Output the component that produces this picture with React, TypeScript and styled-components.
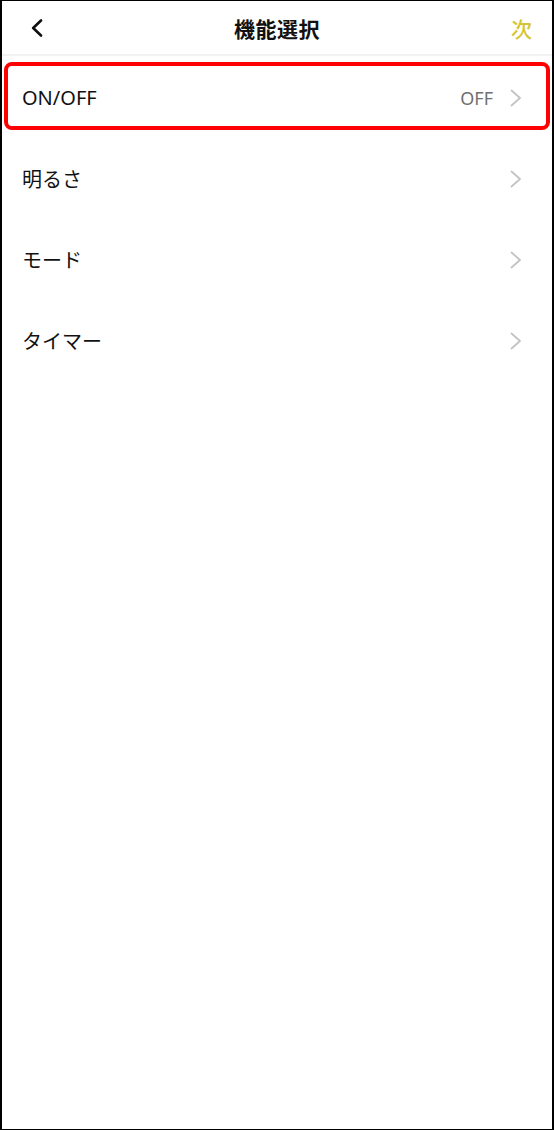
import { createGlobalStyle } from 'styled-components';
import styled from 'styled-components';

const GlobalStyle = createGlobalStyle`
  html, body {
    margin: 0;
    padding: 0;
    background: #ffffff;
  }
  body {
    font-family: 'Noto Sans', 'Noto Sans CJK JP', sans-serif;
    color: #111111;
  }
`;

type Feature = {
  id: string;
  label: string;
  value?: string;
  highlighted?: boolean;
};

const features: Feature[] = [
  { id: 'power', label: 'ON/OFF', value: 'OFF', highlighted: true },
  { id: 'brightness', label: '明るさ' },
  { id: 'mode', label: 'モード' },
  { id: 'timer', label: 'タイマー' },
];

const BackIcon = () => (
  <svg width="12" height="18" viewBox="0 0 12 18" fill="none">
    <polyline
      points="10,1.5 2.2,9 10,16.5"
      stroke="#111111"
      strokeWidth="2.6"
      strokeLinecap="round"
      strokeLinejoin="round"
    />
  </svg>
);

const ChevronIcon = () => (
  <svg width="12" height="18" viewBox="0 0 12 18" fill="none">
    <polyline
      points="1.5,1.5 10,9 1.5,16.5"
      stroke="#c3c3c3"
      strokeWidth="1.8"
      strokeLinecap="round"
      strokeLinejoin="round"
    />
  </svg>
);

const App = () => {
  return (
    <>
      <GlobalStyle />
      <Frame>
        <Header>
          <BackButton aria-label="戻る">
            <BackIcon />
          </BackButton>
          <Title>機能選択</Title>
          <NextButton>次</NextButton>
        </Header>
        <FeatureList>
          {features.map((item) => {
            return (
              <FeatureRow key={item.id}>
                {item.highlighted && <Highlight />}
                <RowLabel>{item.label}</RowLabel>
                <RowTrail>
                  {item.value && <RowValue>{item.value}</RowValue>}
                  <ChevronIcon />
                </RowTrail>
              </FeatureRow>
            );
          })}
        </FeatureList>
      </Frame>
    </>
  );
};

export default App;

const Frame = styled.div`
  box-sizing: border-box;
  width: 554px;
  height: 1130px;
  border-top: 1px solid #000000;
  border-bottom: 1px solid #000000;
  border-left: 2px solid #000000;
  border-right: 2px solid #000000;
  background: #ffffff;
  display: flex;
  flex-direction: column;
`;

const Header = styled.header`
  height: 53px;
  padding: 0 20px;
  display: grid;
  grid-template-columns: 1fr auto 1fr;
  align-items: center;
  border-bottom: 2px solid #f2f2f2;
`;

const BackButton = styled.button`
  justify-self: start;
  margin-left: 9px;
  padding: 0;
  border: none;
  background: none;
  display: flex;
  align-items: center;
`;

const Title = styled.h1`
  margin: 0;
  font-size: 21px;
  font-weight: 700;
  letter-spacing: 0.5px;
  color: #111111;
`;

const NextButton = styled.button`
  justify-self: end;
  padding: 0;
  border: none;
  background: none;
  font-family: 'Noto Sans CJK JP', sans-serif;
  font-size: 21px;
  font-weight: 500;
  color: #d5c536;
`;

const FeatureList = styled.ul`
  list-style: none;
  margin: 0;
  padding: 1px 0 0;
`;

const FeatureRow = styled.li`
  position: relative;
  height: 81px;
  padding: 0 30px 0 20px;
  display: flex;
  align-items: center;
  justify-content: space-between;
`;

const Highlight = styled.div`
  position: absolute;
  top: 5px;
  left: 2px;
  right: 2px;
  height: 68px;
  box-sizing: border-box;
  border: 4px solid #ff0000;
  border-radius: 8px;
  pointer-events: none;
`;

const RowLabel = styled.span`
  font-size: 20px;
  color: #111111;
`;

const RowTrail = styled.div`
  display: flex;
  align-items: center;
  gap: 17px;
`;

const RowValue = styled.span`
  font-size: 18px;
  color: #707070;
`;
